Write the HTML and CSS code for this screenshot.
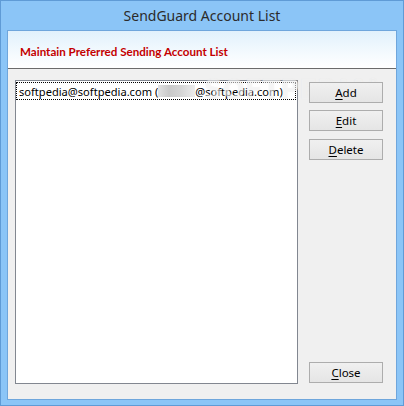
FILE: index.html
```html
<!DOCTYPE html>
<html>
<head>
<meta charset="utf-8">
<link rel="stylesheet" href="styles.css">
</head>
<body>
<div class="window">
  <div class="titlebar">SendGuard Account List</div>
  <div class="client">
    <div class="header">Maintain Preferred Sending Account List</div>
    <div class="main">
      <div class="listbox">
        <div class="item">softpedia@softpedia.com (<span class="blur"></span>@softpedia.com)</div>
      </div>
      <div class="buttons">
        <button class="btn"><u>A</u>dd</button>
        <button class="btn"><u>E</u>dit</button>
        <button class="btn btn-delete"><u>D</u>elete</button>
        <button class="btn btn-close"><u>C</u>lose</button>
      </div>
      <div class="watermark">SOFTPEDIA<sup>®</sup></div>
    </div>
  </div>
</div>
</body>
</html>
```

FILE: styles.css
```css
* { box-sizing: border-box; }
html, body { margin: 0; padding: 0; }
body {
  width: 404px;
  height: 406px;
  overflow: hidden;
  font-family: "Noto Sans", "Open Sans", sans-serif;
  font-size: 12px;
  color: #000;
}
.window {
  width: 404px;
  height: 406px;
  background: #8bc5f7;
  border: 1px solid #5f9bd6;
  padding: 0 6px 5px 6px;
  display: flex;
  flex-direction: column;
}
.titlebar {
  height: 29px;
  display: flex;
  align-items: center;
  justify-content: center;
  font-size: 14px;
  color: #2b2b2b;
  padding-bottom: 1px;
}
.client {
  flex: 1;
  border: 1px solid #6fa6dc;
  background: #f0f0f0;
  display: flex;
  flex-direction: column;
}
.header {
  height: 38px;
  background: linear-gradient(to bottom, #e1f1fc 0%, #f4fafe 60%, #ffffff 100%);
  border-bottom: 1px solid #6b6b6b;
  color: #c40000;
  font-family: Lato, "Noto Sans", sans-serif;
  font-weight: bold;
  font-size: 11.6px;
  padding: 14px 0 0 12px;
  line-height: 14px;
}
.main {
  position: relative;
  flex: 1;
  display: flex;
  padding: 11px 0 0 7px;
  gap: 11px;
  overflow: hidden;
}
.listbox {
  width: 283px;
  height: 304px;
  background: #fff;
  border: 1px solid #828790;
  padding: 1px 1px 0 0;
}
.item {
  height: 18px;
  width: 280px;
  border: 1px dotted #000;
  padding-left: 2px;
  line-height: 15px;
  font-size: 11.1px;
  white-space: nowrap;
  display: flex;
  align-items: center;
}
.blur {
  display: inline-block;
  width: 37px;
  height: 12px;
  background: linear-gradient(to right, #e2e2e2, #c9c9c9 30%, #d4d4d4 60%, #ececec);
}
.buttons {
  position: relative;
  z-index: 1;
  display: flex;
  flex-direction: column;
  padding-top: 2px;
  width: 74px;
}
.btn {
  width: 74px;
  height: 21px;
  padding: 0;
  font-family: inherit;
  font-size: 11.5px;
  color: #000;
  background: linear-gradient(to bottom, #f0f0f0, #e5e5e5);
  border: 1px solid #adadad;
  border-radius: 0;
  line-height: 17px;
}
.btn + .btn { margin-top: 7px; }
.btn.btn-delete { margin-top: 8px; }
.btn.btn-close { margin-top: auto; margin-bottom: 16px; }
.btn u { text-decoration-thickness: 1px; text-underline-offset: 2px; }
.watermark {
  position: absolute;
  left: 196px;
  top: 6px;
  font-family: "DejaVu Sans", sans-serif;
  font-weight: bold;
  font-size: 26px;
  color: rgba(255, 255, 255, 0.45);
  text-shadow: 0 0 1px rgba(200, 200, 200, 0.3);
  pointer-events: none;
  white-space: nowrap;
}
.watermark sup {
  font-size: 9px;
  vertical-align: 14px;
}
```
